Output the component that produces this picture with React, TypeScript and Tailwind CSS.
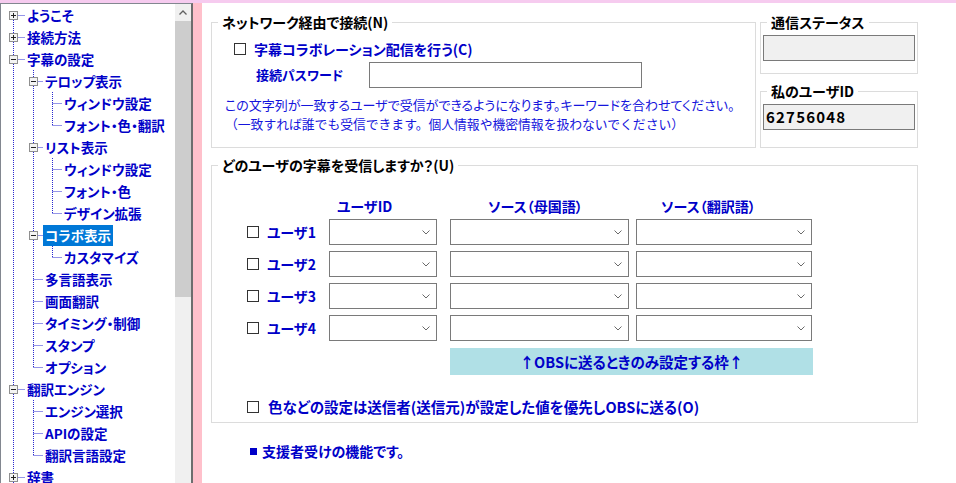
import React from 'react'

type TreeRow = {
  label: string
  level: 0 | 1 | 2
  toggle?: '+' | '-'
  next: boolean
  cont: boolean[]
  selected?: boolean
}

const rows: TreeRow[] = [
  { label: 'ようこそ', level: 0, toggle: '+', next: true, cont: [] },
  { label: '接続方法', level: 0, toggle: '+', next: true, cont: [] },
  { label: '字幕の設定', level: 0, toggle: '-', next: true, cont: [] },
  { label: 'テロップ表示', level: 1, toggle: '-', next: true, cont: [true] },
  { label: 'ウィンドウ設定', level: 2, next: true, cont: [true, true] },
  { label: 'フォント・色・翻訳', level: 2, next: false, cont: [true, true] },
  { label: 'リスト表示', level: 1, toggle: '-', next: true, cont: [true] },
  { label: 'ウィンドウ設定', level: 2, next: true, cont: [true, true] },
  { label: 'フォント・色', level: 2, next: true, cont: [true, true] },
  { label: 'デザイン拡張', level: 2, next: false, cont: [true, true] },
  { label: 'コラボ表示', level: 1, toggle: '-', next: true, cont: [true], selected: true },
  { label: 'カスタマイズ', level: 2, next: false, cont: [true, true] },
  { label: '多言語表示', level: 1, next: true, cont: [true] },
  { label: '画面翻訳', level: 1, next: true, cont: [true] },
  { label: 'タイミング・制御', level: 1, next: true, cont: [true] },
  { label: 'スタンプ', level: 1, next: true, cont: [true] },
  { label: 'オプション', level: 1, next: false, cont: [true] },
  { label: '翻訳エンジン', level: 0, toggle: '-', next: true, cont: [] },
  { label: 'エンジン選択', level: 1, next: true, cont: [true] },
  { label: 'APIの設定', level: 1, next: true, cont: [true] },
  { label: '翻訳言語設定', level: 1, next: false, cont: [true] },
  { label: '辞書', level: 0, toggle: '+', next: true, cont: [] },
]

const lineX = [12.5, 32.5, 51.5]
const svgW = [24, 42, 61]
const DOT = '#2a2ad0'

// 行ごとの罫線（点線）と開閉ボックス
function Connector({ row, first }: { row: TreeRow; first: boolean }) {
  const x = lineX[row.level]
  const w = svgW[row.level]
  return (
    <svg width={w} height={22} className="shrink-0">
      {row.cont.map((c, i) =>
        c ? <line key={i} x1={lineX[i]} y1={0} x2={lineX[i]} y2={22} stroke={DOT} strokeDasharray="1 1" /> : null,
      )}
      {!first && <line x1={x} y1={0} x2={x} y2={11} stroke={DOT} strokeDasharray="1 1" />}
      {row.next && <line x1={x} y1={12} x2={x} y2={22} stroke={DOT} strokeDasharray="1 1" />}
      <line x1={x} y1={11.5} x2={w} y2={11.5} stroke={DOT} strokeDasharray="1 1" />
      {row.toggle && (
        <g>
          <rect x={x - 4} y={7.5} width={8} height={8} fill="#f4f4f4" stroke="#8f8f8f" />
          <rect x={x - 2.5} y={11} width={5} height={1} fill="#222" />
          {row.toggle === '+' && <rect x={x - 0.5} y={9} width={1} height={5} fill="#222" />}
        </g>
      )}
    </svg>
  )
}

function Tree() {
  return (
    <div className="flex h-[480px] w-[193px] shrink-0 border-t border-l border-r-2 border-t-[#828790] border-l-[#828790] border-r-[#6d6d6d] bg-white">
      <div className="flex-1 overflow-hidden">
        {rows.map((r, i) => (
          <div key={i} className="flex h-[22px] items-center">
            <Connector row={r} first={i === 0} />
            <span
              className={
                r.selected
                  ? 'whitespace-nowrap bg-[#0078d7] px-[2px] text-[13.5px] font-bold leading-[21px] text-white'
                  : 'whitespace-nowrap px-[2px] text-[13.5px] font-bold leading-[21px] text-[#0000c8]'
              }
            >
              {r.label}
            </span>
          </div>
        ))}
      </div>
      <div className="flex w-[16px] shrink-0 flex-col bg-[#f0f0f0]">
        <div className="flex h-[17px] items-center justify-center">
          <svg width="8" height="5" viewBox="0 0 8 5">
            <path d="M0.5 4.5 L4 1 L7.5 4.5" fill="none" stroke="#606060" strokeWidth="1.3" />
          </svg>
        </div>
        <div className="h-[276px] bg-[#cdcdcd]" />
      </div>
    </div>
  )
}

function Checkbox() {
  return <span className="inline-block h-[12px] w-[12px] shrink-0 border border-[#333333] bg-white" />
}

function Combo({ className }: { className: string }) {
  return (
    <div className={`flex h-[26px] items-center justify-end border border-[#7a7a7a] bg-white pr-[6px] ${className}`}>
      <svg width="8" height="5" viewBox="0 0 8 5">
        <path d="M0.5 0.5 L4 4 L7.5 0.5" fill="none" stroke="#6a6a6a" strokeWidth="1" />
      </svg>
    </div>
  )
}

function Group({ title, className, children }: { title: string; className: string; children: React.ReactNode }) {
  return (
    <fieldset className={`border border-[#dcdcdc] ${className}`}>
      <legend className="ml-[6px] px-[4px] text-[14px] font-bold leading-4 text-black">{title}</legend>
      {children}
    </fieldset>
  )
}

const users = ['ユーザ1', 'ユーザ2', 'ユーザ3', 'ユーザ4']

export default function App() {
  return (
    <div className="h-[483px] w-[956px] overflow-hidden bg-white font-['Noto_Sans_CJK_JP','Noto_Sans',sans-serif] [font-feature-settings:'palt']">
      <div className="h-[3px] bg-[#f6cbef]" />
      <div className="flex">
        <Tree />
        <div className="h-[480px] w-[9px] shrink-0 bg-[#ffc0cb]" />
        <div className="flex-1 pl-[9px] pt-[11px]">
          <div className="flex items-start gap-[4px]">
            <Group title="ネットワーク経由で接続(N)" className="w-[545px] pb-[14px]">
              <div className="mt-[9px] flex h-[20px] items-center pl-[22px]">
                <Checkbox />
                <span className="ml-[8px] text-[14px] font-bold text-[#0000c8]">字幕コラボレーション配信を行う(C)</span>
              </div>
              <div className="mt-[3px] flex items-center pl-[44px]">
                <span className="w-[113px] text-[13px] font-bold text-[#0000c8]">接続パスワード</span>
                <div className="h-[26px] w-[273px] border border-[#7a7a7a] bg-white" />
              </div>
              <div className="mt-[7px] pl-[13px] text-[13px] leading-[19px] text-[#1515dc]">
                <div>この文字列が一致するユーザで受信ができるようになります。キーワードを合わせてください。</div>
                <div className="text-[12.8px] [font-feature-settings:normal]">
                  （一致すれば誰でも受信できます。個人情報や機密情報を扱わないでください）
                </div>
              </div>
            </Group>
            <div className="flex w-[158px] flex-col">
              <Group title="通信ステータス" className="w-[158px]">
                <div className="mx-[2px] mb-[12px] mt-[5px] h-[26px] border border-[#7a7a7a] bg-[#f0f0f0]" />
              </Group>
              <Group title="私のユーザID" className="mt-[9px] w-[158px]">
                <div className="mx-[2px] mb-[17px] mt-[5px] flex h-[26px] items-center border border-[#7a7a7a] bg-[#f0f0f0] pl-[2px] text-[15px] font-bold tracking-[1.2px] text-black">
                  62756048
                </div>
              </Group>
            </div>
          </div>

          <Group title="どのユーザの字幕を受信しますか？(U)" className="mt-[9px] w-[707px] pb-[5px]">
            <div className="mt-[25px] flex h-[16px] pl-[35px] text-[14px] font-bold leading-4 text-[#0000c8]">
              <div className="w-[82px]" />
              <div className="w-[108px] pl-[8px]">ユーザID</div>
              <div className="ml-[13px] w-[179px] pl-[38px]">ソース（母国語）</div>
              <div className="ml-[7px] w-[176px] pl-[25px]">ソース（翻訳語）</div>
            </div>
            <div className="mt-[5px] flex flex-col gap-[6px]">
              {users.map((u) => (
                <div key={u} className="flex items-center pl-[35px]">
                  <div className="flex w-[82px] items-center">
                    <Checkbox />
                    <span className="ml-[8px] text-[14px] font-bold text-[#0000c8]">{u}</span>
                  </div>
                  <Combo className="w-[108px]" />
                  <Combo className="ml-[13px] w-[179px]" />
                  <Combo className="ml-[7px] w-[176px]" />
                </div>
              ))}
            </div>
            <div className="ml-[238px] mt-[7px] flex h-[27px] w-[363px] items-center justify-center bg-[#b0e0e6] text-[14.5px] font-bold text-[#0000c8]">
              ↑OBSに送るときのみ設定する枠↑
            </div>
            <div className="mt-[22px] flex h-[20px] items-center pl-[35px]">
              <Checkbox />
              <span className="ml-[9px] text-[14.5px] font-bold text-[#0000c8]">
                色などの設定は送信者(送信元)が設定した値を優先しOBSに送る(O)
              </span>
            </div>
          </Group>

          <div className="ml-[39px] mt-[20px] flex h-[16px] items-center text-[14px] font-bold text-[#0000c8]">
            <span className="inline-block h-[7px] w-[7px] bg-[#0000c8]" />
            <span className="ml-[5px]">支援者受けの機能です。</span>
          </div>
        </div>
      </div>
    </div>
  )
}
